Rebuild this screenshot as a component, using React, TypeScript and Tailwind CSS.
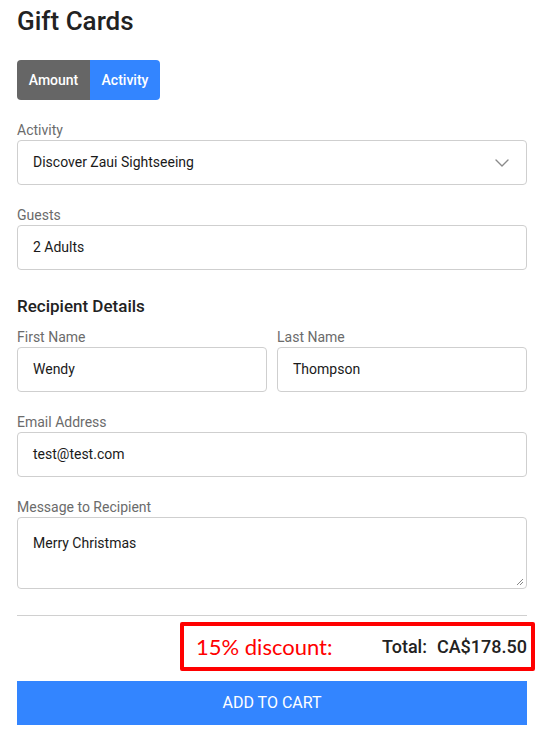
import { ChevronDown } from "lucide-react"

const font = "font-['Roboto','Liberation_Sans',sans-serif]"

function Field({ label, value, className = "" }: { label: string; value: string; className?: string }) {
  return (
    <div className={className}>
      <label className="block h-[22px] text-[14px] leading-[24px] text-[#6b6b6b]">{label}</label>
      <div className="flex h-[45px] items-center rounded-[4px] border border-[#cfcfcf] bg-white px-[15px] text-[14px] text-[#1a1a1a]">
        {value}
      </div>
    </div>
  )
}

export default function App() {
  return (
    <div className={`${font} min-h-[744px] bg-white pl-[17px] pr-[22px] pt-[5px] text-[#212529]`}>
      <h1 className="text-[26px] font-medium leading-[32px] text-[#222]">Gift Cards</h1>

      <div className="mt-[23px] flex">
        <button className="h-[40px] w-[73px] rounded-l-[4px] bg-[#666666] text-[14px] font-medium text-white">Amount</button>
        <button className="h-[40px] w-[70px] rounded-r-[4px] bg-[#3385ff] text-[14px] font-medium text-white">Activity</button>
      </div>

      <div className="mt-[18px]">
        <label className="block h-[22px] text-[14px] leading-[24px] text-[#6b6b6b]">Activity</label>
        <div className="flex h-[45px] items-center justify-between rounded-[4px] border border-[#cfcfcf] bg-white pl-[15px] pr-[12px] text-[14px] text-[#1a1a1a]">
          <span>Discover Zaui Sightseeing</span>
          <ChevronDown className="h-[24px] w-[24px] text-[#8a8a8a]" strokeWidth={1.4} />
        </div>
      </div>

      <Field label="Guests" value="2 Adults" className="mt-[18px]" />

      <h2 className="mt-[24px] text-[17px] font-medium leading-[24px] text-[#222]">Recipient Details</h2>

      <div className="mt-[7px] grid grid-cols-2 gap-[10px]">
        <Field label="First Name" value="Wendy" />
        <Field label="Last Name" value="Thompson" />
      </div>

      <Field label="Email Address" value="test@test.com" className="mt-[18px]" />

      <div className="mt-[18px]">
        <label className="block h-[22px] text-[14px] leading-[24px] text-[#6b6b6b]">Message to Recipient</label>
        <div className="relative h-[72px] rounded-[4px] border border-[#cfcfcf] bg-white px-[15px] pt-[15px] text-[14px] text-[#1a1a1a]">
          Merry Christmas
          <svg className="absolute bottom-[2px] right-[2px]" width="8" height="8" viewBox="0 0 8 8">
            <path d="M7 1 1 7M7 4 4 7" stroke="#888" strokeWidth="1" fill="none" />
          </svg>
        </div>
      </div>

      <hr className="mt-[26px] border-t border-[#d0d0d0]" />

      <div className="mt-[6px] flex justify-end">
        <div className="-mr-[8px] flex h-[49px] w-[355px] items-center justify-between rounded-[2px] border-[4px] border-[#ff0000] pl-[12px] pr-[4px]">
          <span className="font-['Lato','Open_Sans',sans-serif] text-[22px] text-[#ff0000]">15% discount:</span>
          <span className="text-[18px] font-medium text-[#222]">
            Total:<span className="ml-[10px]">CA$178.50</span>
          </span>
        </div>
      </div>

      <button className="mt-[10px] h-[44px] w-full bg-[#3385ff] text-[16px] uppercase text-white">Add to cart</button>
    </div>
  )
}
